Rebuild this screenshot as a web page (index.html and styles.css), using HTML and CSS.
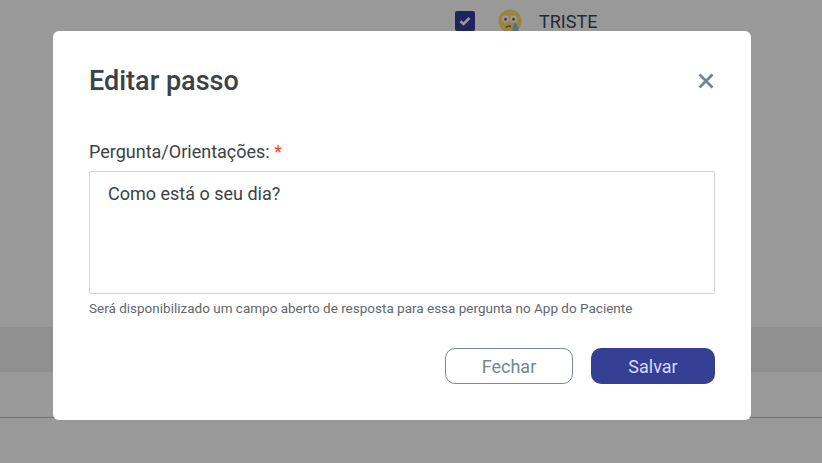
FILE: index.html
```html
<!DOCTYPE html>
<html lang="pt">
<head>
<meta charset="utf-8">
<title>Editar passo</title>
<link rel="stylesheet" href="styles.css">
</head>
<body>
<div class="page">
  <div class="option">
    <span class="check"><svg width="12" height="10" viewBox="0 0 12 10"><path d="M1.500 5.200 4.500 8 10.500 2" fill="none" stroke="#fff" stroke-width="2.600"/></svg></span>
    <svg class="emoji" width="24" height="24" viewBox="0 0 24 24">
      <circle cx="12" cy="12" r="11.500" fill="#ffdd70"/>
      <circle cx="7.500" cy="10" r="3.400" fill="#fff"/>
      <circle cx="15.500" cy="10" r="3.400" fill="#fff"/>
      <circle cx="7.500" cy="10.300" r="1.500" fill="#7a6a5a"/>
      <circle cx="15.500" cy="10.300" r="1.500" fill="#7a6a5a"/>
      <path d="M8 18.500q2.500-2 5-1" fill="none" stroke="#8a6528" stroke-width="1.400"/>
      <path d="M17 13.500c-1.500 3-2.500 5-2.500 7a3 3 0 0 0 6 0c0-2-1.500-4.500-3.500-7z" fill="#78c0f5"/>
    </svg>
    <span class="option-label">TRISTE</span>
  </div>
  <div class="band"></div>
  <div class="rule"></div>
</div>
<div class="backdrop"></div>
<div class="modal">
  <div class="modal-head">
    <h1 class="modal-title">Editar passo</h1>
    <svg class="close" width="16" height="16" viewBox="0 0 16 16"><path d="M1.500 1.500 14.500 14.500M14.500 1.500 1.500 14.500" fill="none" stroke="#74858f" stroke-width="2.800"/></svg>
  </div>
  <label class="field-label">Pergunta/Orientações: <span class="req">*</span></label>
  <div class="textarea">Como está o seu dia?</div>
  <p class="hint">Será disponibilizado um campo aberto de resposta para essa pergunta no App do Paciente</p>
  <div class="actions">
    <button class="btn btn-close">Fechar</button>
    <button class="btn btn-save">Salvar</button>
  </div>
</div>
</body>
</html>
```
FILE: styles.css
```css
html, body { margin: 0; padding: 0; height: 100%; overflow: hidden; }
body { font-family: Roboto, sans-serif; background: #fff; }
.page { height: 463px; display: flex; flex-direction: column; }
.option { display: flex; align-items: center; height: 42px; padding-left: 455px; box-sizing: border-box; }
.check { width: 20px; height: 20px; background: #353f9a; border-radius: 2px; display: flex; align-items: center; justify-content: center; }
.emoji { margin-left: 23px; }
.option-label { margin-left: 17px; font-size: 18px; color: #3c4652; }
.band { margin-top: 285px; height: 45px; background: #f0f0f0; }
.rule { margin-top: 45px; height: 1px; background: #c4c4c4; }
.backdrop { position: fixed; inset: 0; background: rgba(0, 0, 0, .4); }
.modal { position: fixed; left: 53px; top: 31px; width: 698px; height: 389px; box-sizing: border-box; padding: 0 36px; background: #fff; border-radius: 6px; }
.modal-head { display: flex; align-items: center; justify-content: space-between; height: 100px; }
.modal-title { margin: 0; font-size: 27px; font-weight: 500; color: #3c4146; }
.close { margin-right: 1px; }
.field-label { display: block; margin-top: 10px; font-size: 18px; line-height: 22px; color: #3c4146; }
.req { color: #f44336; }
.textarea { margin-top: 8px; height: 123px; box-sizing: border-box; padding: 11px 18px; border: 1px solid #cfd4d8; border-radius: 2px; font-size: 18px; line-height: 22px; color: #3c4146; }
.hint { margin: 6px 0 0; font-size: 13.500px; line-height: 16px; color: #62676d; }
.actions { display: flex; justify-content: flex-end; gap: 18px; margin-top: 32px; }
.btn { width: 124px; height: 36px; box-sizing: border-box; border-radius: 10px; font-family: Roboto, sans-serif; font-size: 18px; padding: 0; }
.btn-close { width: 128px; background: #fff; border: 1px solid #7b8a97; color: #7a8592; }
.btn-save { background: #353f94; border: 0; color: #d5dcff; }
```
